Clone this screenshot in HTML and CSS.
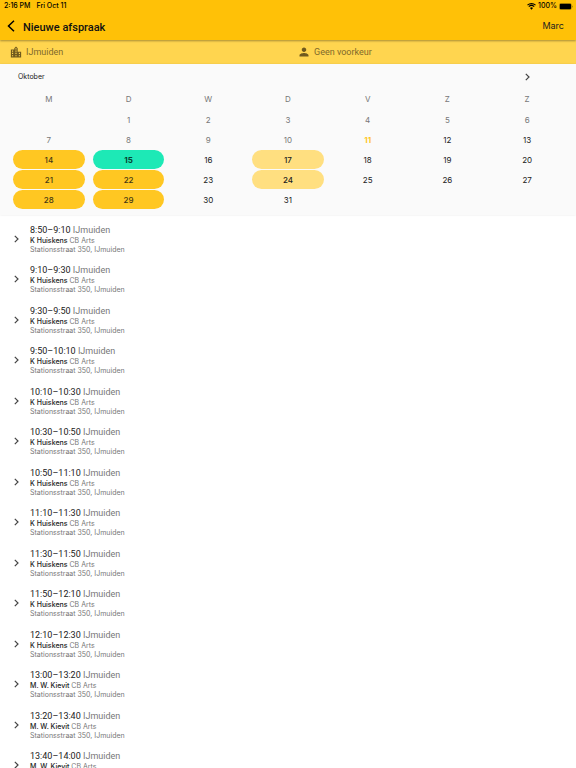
FILE: index.html
```html
<!DOCTYPE html>
<html lang="nl">
<head>
  <meta charset="utf-8">
  <title>Nieuwe afspraak</title>
  <meta name="viewport" content="width=device-width, initial-scale=1.0">
  <link rel="stylesheet" href="styles.css">
</head>
<body>
  <header class="header">
    <div class="status">
      <span>2:16 PM</span>
      <span>Fri Oct 11</span>
      <span class="status-right">
        <svg width="9" height="7" viewBox="0 0 18 14"><path d="M3.600 7.400a7.800 7.800 0 0 1 10.800 0M1 4.400a11.600 11.600 0 0 1 16 0" fill="none" stroke="#000" stroke-width="2.200"/><path d="M9 13.500l3-3.600a4.400 4.400 0 0 0-6 0z"/></svg>
        <span>100%</span>
        <svg width="14" height="7" viewBox="0 0 28 14"><rect x=".6" y=".6" width="24.400" height="12.800" rx="3.500" fill="none" stroke="#000" stroke-opacity=".4"/><rect x="1.500" y="1.500" width="22.600" height="11" rx="2.500"/><path d="M26 4.800c1.600.6 1.600 3.800 0 4.400z" opacity=".5"/></svg>
      </span>
    </div>
    <div class="toolbar">
      <button class="back" aria-label="Terug">
        <svg width="8" height="12" viewBox="0 0 8 12"><path d="M7 .8L1.500 6 7 11.200" fill="none" stroke="#000" stroke-width="1.500"/></svg>
      </button>
      <h1>Nieuwe afspraak</h1>
      <button class="user">Marc</button>
    </div>
  </header>

  <div class="filters">
    <button class="filter">
      <svg width="12" height="12" viewBox="2 1 20 21"><path d="M15 11V5l-3-3-3 3v2H3v14h18V11h-6zm-8 8H5v-2h2v2zm0-4H5v-2h2v2zm0-4H5V9h2v2zm6 8h-2v-2h2v2zm0-4h-2v-2h2v2zm0-4h-2V9h2v2zm0-4h-2V5h2v2zm6 12h-2v-2h2v2zm0-4h-2v-2h2v2z"/></svg>
      IJmuiden
    </button>
    <button class="filter">
      <svg width="12" height="12" viewBox="0 0 24 24"><path d="M12 12c2.500 0 4.500-2 4.500-4.500S14.500 3 12 3 7.500 5 7.500 7.500 9.500 12 12 12zm0 2c-3 0-9 1.500-9 4.500V21h18v-2.500c0-3-6-4.500-9-4.500z"/></svg>
      Geen voorkeur
    </button>
  </div>

  <section class="calendar">
    <div class="month">
      <h2>Oktober</h2>
      <button class="next" aria-label="Volgende maand">
        <svg width="5" height="8" viewBox="0 0 5 8"><path d="M.8.8L4 4 .8 7.200" fill="none" stroke="#444" stroke-width="1.200"/></svg>
      </button>
    </div>
    <table>
      <thead>
        <tr><th>M</th><th>D</th><th>W</th><th>D</th><th>V</th><th>Z</th><th>Z</th></tr>
      </thead>
      <tbody id="days"></tbody>
    </table>
  </section>

  <ul class="slots" id="slots"></ul>

  <script>
    const today = 11;
    const selected = 15;
    const available = [14, 21, 22, 28, 29];
    const limited = [17, 24];

    const slots = [
      ['8:50–9:10', 'K Huiskens'],
      ['9:10–9:30', 'K Huiskens'],
      ['9:30–9:50', 'K Huiskens'],
      ['9:50–10:10', 'K Huiskens'],
      ['10:10–10:30', 'K Huiskens'],
      ['10:30–10:50', 'K Huiskens'],
      ['10:50–11:10', 'K Huiskens'],
      ['11:10–11:30', 'K Huiskens'],
      ['11:30–11:50', 'K Huiskens'],
      ['11:50–12:10', 'K Huiskens'],
      ['12:10–12:30', 'K Huiskens'],
      ['13:00–13:20', 'M. W. Kievit'],
      ['13:20–13:40', 'M. W. Kievit'],
      ['13:40–14:00', 'M. W. Kievit']
    ];

    function dayClass(day) {
      if (day === selected) return 'selected';
      if (day === today) return 'today';
      if (day < today) return 'past';
      if (available.includes(day)) return 'available';
      if (limited.includes(day)) return 'limited';
      return '';
    }

    // October starts on a Tuesday, so the first Monday cell is day 0
    const days = document.getElementById('days');
    for (let start = 0; start <= 31; start += 7) {
      const row = days.insertRow();
      for (let day = start; day < start + 7; day++) {
        const cell = row.insertCell();
        if (day < 1 || day > 31) continue;
        const button = document.createElement('button');
        button.className = 'day ' + dayClass(day);
        button.textContent = day;
        cell.appendChild(button);
      }
    }

    document.getElementById('slots').innerHTML = slots.map(([time, doctor]) => `
      <li>
        <button class="slot">
          <svg width="5" height="8" viewBox="0 0 5 8"><path d="M.8.8L4 4 .8 7.200" fill="none" stroke="#444" stroke-width="1.200"/></svg>
          <span class="slot-text">
            <span class="time"><b>${time}</b> IJmuiden</span>
            <span class="doctor"><b>${doctor}</b> CB Arts</span>
            <span class="address">Stationsstraat 350, IJmuiden</span>
          </span>
        </button>
      </li>`).join('');
  </script>
</body>
</html>
```

FILE: styles.css
```css
* {
  box-sizing: border-box;
}

body {
  display: flex;
  flex-direction: column;
  height: 100vh;
  margin: 0;
  overflow: hidden;
  font-family: Inter, "Liberation Sans", sans-serif;
  font-size: 9px;
  color: #212121;
  background: #fff;
}

button {
  padding: 0;
  border: none;
  background: none;
  font: inherit;
  color: inherit;
  cursor: pointer;
}

svg {
  display: block;
  flex: none;
}

.header {
  position: relative;
  flex: none;
  background: #ffc107;
  box-shadow: 0 1px 2px rgba(0, 0, 0, 0.35);
}

.status {
  display: flex;
  gap: 6px;
  padding: 0 3px 0 4px;
  font-size: 7px;
  font-weight: 500;
  line-height: 12px;
  color: #000;
}

.status-right {
  display: flex;
  align-items: center;
  gap: 2px;
  margin-left: auto;
}

.toolbar {
  display: flex;
  align-items: center;
  height: 28px;
  padding: 0 12px 0 7px;
}

h1,
.filter,
.time {
  font-family: Roboto, "Liberation Sans", sans-serif;
}

h1 {
  margin: 0 0 0 8px;
  padding-top: 3px;
  font-size: 11px;
  font-weight: 500;
  line-height: 28px;
  color: #111;
}

.user {
  margin-left: auto;
  line-height: 28px;
}

.filters {
  display: grid;
  grid-template-columns: 1fr 1fr;
  flex: none;
  background: #ffd54f;
}

.filter {
  display: flex;
  align-items: center;
  gap: 4px;
  height: 24px;
  padding-left: 10px;
  color: #80692b;
}

.filter svg {
  fill: #705a1e;
}

.calendar {
  position: relative;
  flex: none;
  padding: 0 9px 6px;
  background: #fafafa;
  box-shadow: 0 0 2px rgba(0, 0, 0, 0.1);
}

.month {
  display: flex;
  align-items: center;
  justify-content: space-between;
  height: 25px;
  padding: 0 37px 0 9px;
}

h2 {
  margin: 0;
  font-size: 7px;
  font-weight: 400;
}

table {
  width: 100%;
  table-layout: fixed;
  border-collapse: collapse;
}

th {
  height: 20px;
  padding: 0;
  font-size: 8px;
  font-weight: 400;
  color: #777;
}

td {
  height: 20px;
  padding: 1px 4px 0;
}

.day {
  display: block;
  width: 100%;
  height: 19px;
  border-radius: 10px;
  font-size: 8px;
}

.past {
  color: #777;
}

.today {
  font-weight: 700;
  color: #ffc61f;
}

.available {
  background: #ffc722;
  font-weight: 500;
  color: #453814;
}

.limited {
  background: #ffdf80;
  font-weight: 500;
}

.selected {
  background: #1de9b6;
  font-weight: 700;
  color: #073f31;
}

.slots {
  flex: 1;
  min-height: 0;
  margin: 0;
  padding: 9px 0 0;
  overflow-y: auto;
  scrollbar-width: none;
  list-style: none;
}

.slot {
  display: flex;
  align-items: center;
  gap: 11px;
  width: 100%;
  height: 30px;
  margin-bottom: 10px;
  padding: 0 14px;
  text-align: left;
}

.slots li:nth-child(even) .slot {
  margin-bottom: 11px;
}

.slot-text span {
  display: block;
}

.time {
  line-height: 11px;
  color: #777;
}

.doctor,
.address {
  font-size: 7px;
  line-height: 9px;
  color: #777;
}

.slot b {
  font-weight: 500;
  color: #212121;
}

.time b {
  font-weight: 400;
}
```
